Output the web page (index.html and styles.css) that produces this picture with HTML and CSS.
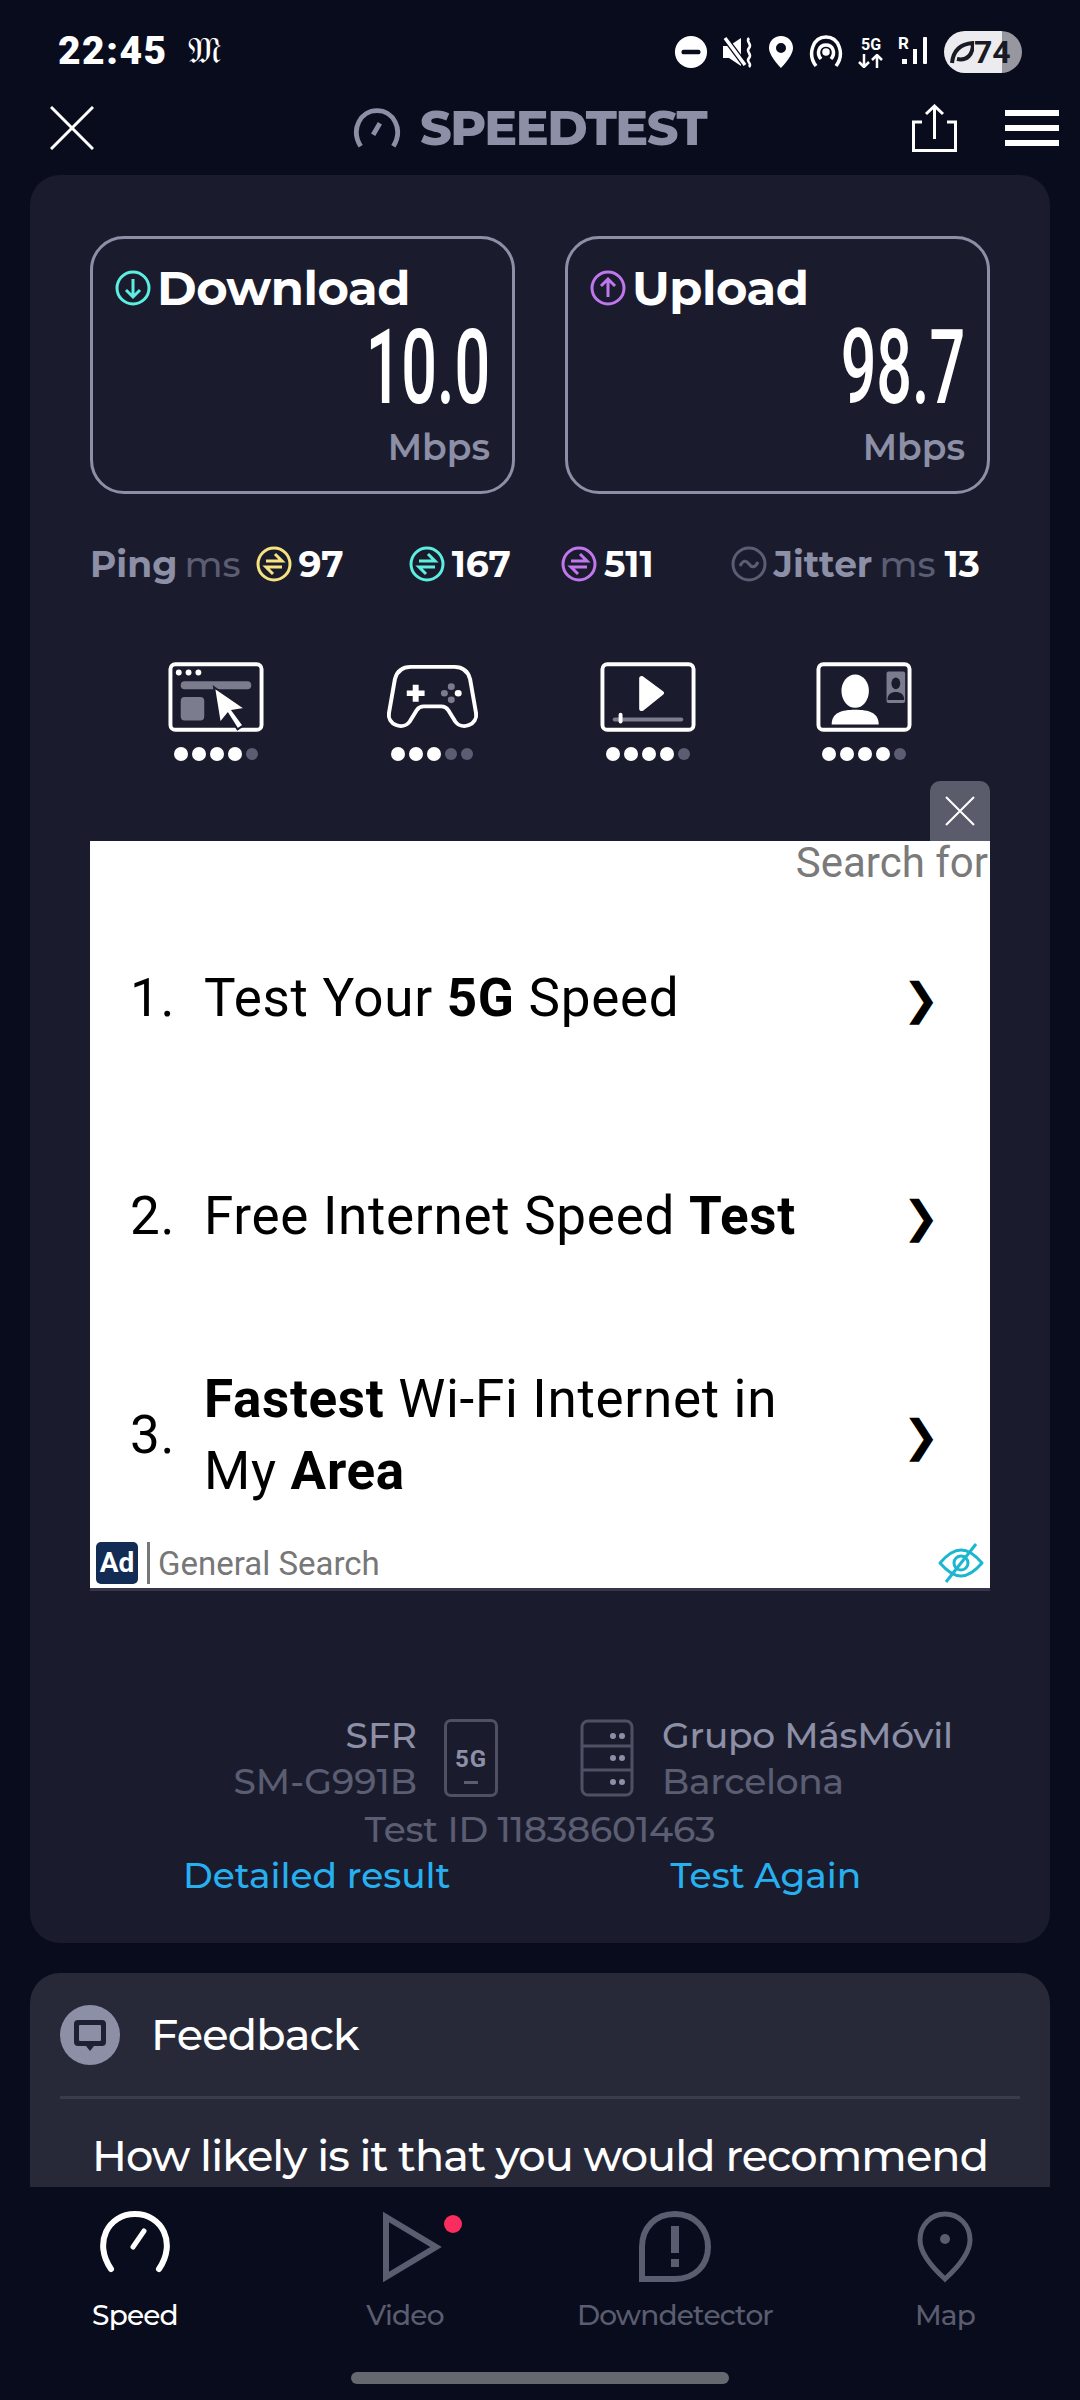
FILE: index.html
```html
<!DOCTYPE html>
<html lang="en">
<head>
<meta charset="utf-8">
<title>Speedtest</title>
<link rel="stylesheet" href="styles.css">
</head>
<body>
<div class="screen">
  <div class="status">
    <div class="status-left"><span class="time">22:45</span><span class="gothic">𝔐</span></div>
    <div class="status-right">
      <svg class="si" width="34" height="36" viewBox="0 0 36 36"><circle cx="18" cy="18" r="17" fill="#fff"/><rect x="8" y="15.500" width="20" height="5" rx="2" fill="#090c1c"/></svg>
      <svg class="si" width="32" height="36" viewBox="0 0 32 36"><path d="M1 12h6l12-8v28l-12-8H1z" fill="#fff"/><path d="M3 4l20 27" stroke="#090c1c" stroke-width="6"/><path d="M3 4l20 27" stroke="#fff" stroke-width="3.500"/><path d="M27 4c-4 4 4 6 0 10s4 6 0 10 4 5 0 9" fill="none" stroke="#fff" stroke-width="2.500"/></svg>
      <svg class="si" width="26" height="36" viewBox="0 0 26 36"><path fill-rule="evenodd" d="M13 2C6 2 1 7 1 14c0 8 12 20 12 20s12-12 12-20C25 7 20 2 13 2zm0 7a5 5 0 1 1 0 10 5 5 0 0 1 0-10z" fill="#fff"/></svg>
      <svg class="si" width="36" height="36" viewBox="0 0 36 36" fill="none" stroke="#fff" stroke-width="3.500"><path d="M8 32C-1 20 5 3 18 3s19 17 10 29"/><path d="M13 25C8 19 11 11 18 11s10 8 5 14"/><circle cx="18" cy="18" r="2" fill="#fff"/></svg>
      <div class="net"><span class="fiveg">5G</span><svg width="26" height="14" viewBox="0 0 26 14" fill="none" stroke="#fff" stroke-width="2.500"><path d="M6 0v12M1 8l5 5 5-5M19 14V2M14 6l5-5 5 5"/></svg></div>
      <div class="sig"><span class="sigr">R</span><svg class="si" width="32" height="36" viewBox="0 0 32 36"><rect x="4" y="25" width="5" height="5" fill="#fff"/><rect x="15" y="15" width="4" height="15" fill="#fff"/><rect x="25" y="3" width="4" height="27" rx="1" fill="#fff"/></svg></div>
      <div class="batt"><svg width="24" height="26" viewBox="0 0 24 26"><path d="M2 24C3 14 8 5 23 4c0 12-6 18-16 16" fill="none" stroke="#1a1a24" stroke-width="4"/></svg><span>74</span></div>
    </div>
  </div>

  <header class="topbar">
    <svg class="x" width="44" height="44" viewBox="0 0 44 44"><path d="M1 1l42 42M43 1L1 43" stroke="#fff" stroke-width="3"/></svg>
    <div class="brand">
      <svg width="48" height="42" viewBox="0 0 50 42" fill="none" stroke="#8d8fa6" stroke-width="5"><path d="M8 40C-3 22 8 3 25 3s28 19 17 37"/><path d="M21 28l7-12" stroke-width="5"/></svg>
      <span>SPEEDTEST</span>
    </div>
    <div class="top-actions">
      <svg width="45" height="48" viewBox="0 0 45 48" fill="none" stroke="#fff" stroke-width="3"><path d="M22.500 2v33M14 10l8.500-8 8.500 8M10 18H1.500v28.500h42V18H35"/></svg>
      <div class="burger"><i></i><i></i><i></i></div>
    </div>
  </header>

  <section class="card result">
    <div class="speeds">
      <div class="speed">
        <div class="speed-head">
          <svg width="36" height="36" viewBox="0 0 36 36" fill="none" stroke="#5ceee0" stroke-width="3"><circle cx="18" cy="18" r="16"/><path d="M18 9v17M11 20l7 7 7-7"/></svg>
          <span>Download</span>
        </div>
        <div class="speed-val"><span>10.0</span></div>
        <div class="speed-unit">Mbps</div>
      </div>
      <div class="speed">
        <div class="speed-head">
          <svg width="36" height="36" viewBox="0 0 36 36" fill="none" stroke="#c077ee" stroke-width="3"><circle cx="18" cy="18" r="16"/><path d="M18 27V10M11 16l7-7 7 7"/></svg>
          <span>Upload</span>
        </div>
        <div class="speed-val"><span>98.7</span></div>
        <div class="speed-unit">Mbps</div>
      </div>
    </div>

    <div class="pings">
      <div class="ping p1"><b class="lbl">Ping</b><span class="ms">ms</span>
        <svg width="36" height="36" viewBox="0 0 36 36" fill="none" stroke="#f6e27f" stroke-width="3"><circle cx="18" cy="18" r="16"/><path d="M10 15h16l-7-7M26 21H10l7 7"/></svg><b class="pv">97</b></div>
      <div class="ping p2">
        <svg width="36" height="36" viewBox="0 0 36 36" fill="none" stroke="#5ceee0" stroke-width="3"><circle cx="18" cy="18" r="16"/><path d="M10 15h16l-7-7M26 21H10l7 7"/></svg><b class="pv">167</b></div>
      <div class="ping p3">
        <svg width="36" height="36" viewBox="0 0 36 36" fill="none" stroke="#c077ee" stroke-width="3"><circle cx="18" cy="18" r="16"/><path d="M10 15h16l-7-7M26 21H10l7 7"/></svg><b class="pv">511</b></div>
      <div class="ping p4">
        <svg width="36" height="36" viewBox="0 0 36 36" fill="none" stroke="#5b5d72" stroke-width="3"><circle cx="18" cy="18" r="16"/><path d="M9 20c3-6 6-6 9-2s6 4 9-2"/></svg><b class="lbl">Jitter</b><span class="ms">ms</span><b class="pv">13</b></div>
    </div>

    <div class="apps">
      <div class="app">
        <svg width="96" height="72" viewBox="0 0 98 72"><rect x="2.500" y="2.500" width="93" height="67" rx="5" fill="none" stroke="#fff" stroke-width="4"/><circle cx="11" cy="11" r="3" fill="#fff"/><circle cx="21" cy="11" r="3" fill="#fff"/><circle cx="31" cy="11" r="3" fill="#fff"/><rect x="13" y="20" width="72" height="8" rx="4" fill="#7b7c8e"/><rect x="13" y="36" width="24" height="24" rx="4" fill="#7b7c8e"/><path d="M47 26l32 22-13 2 11 15-6 4-10-16-8 10z" fill="#fff" stroke="#1a1c2e" stroke-width="2"/></svg>
        <div class="dots"><i></i><i></i><i></i><i></i><i class="off"></i></div>
      </div>
      <div class="app">
        <svg class="pad" width="93" height="66" viewBox="0 0 94 70" preserveAspectRatio="none"><path d="M25 3h44c9 0 14 5 16 13l6 36c2 12-14 19-21 9l-7-12c-2-3-4-4-7-4H38c-3 0-5 1-7 4l-7 12C17 71 1 64 3 52L9 16c2-8 7-13 16-13z" fill="none" stroke="#fff" stroke-width="4"/><path d="M27 22h6v6h6v6h-6v6h-6v-6h-6v-6h6z" fill="#fff"/><circle cx="66" cy="24" r="3.500" fill="#7b7c8e"/><circle cx="66" cy="38" r="3.500" fill="#7b7c8e"/><circle cx="59" cy="31" r="3.500" fill="#7b7c8e"/><circle cx="73" cy="31" r="3.500" fill="#fff"/></svg>
        <div class="dots"><i></i><i></i><i></i><i class="off"></i><i class="off"></i></div>
      </div>
      <div class="app">
        <svg width="96" height="72" viewBox="0 0 98 72"><rect x="2.500" y="2.500" width="93" height="67" rx="5" fill="none" stroke="#fff" stroke-width="4"/><path d="M40 17c0-2 2-3 4-2l20 15c2 1 2 3 0 4L44 50c-2 1-4 0-4-2z" fill="#fff"/><rect x="13" y="58" width="72" height="4" rx="2" fill="#7b7c8e" transform="translate(0 -1)"/><rect x="19" y="52" width="4" height="11" rx="2" fill="#fff"/></svg>
        <div class="dots"><i></i><i></i><i></i><i></i><i class="off"></i></div>
      </div>
      <div class="app">
        <svg width="96" height="72" viewBox="0 0 98 72"><rect x="2.500" y="2.500" width="93" height="67" rx="5" fill="none" stroke="#fff" stroke-width="4"/><ellipse cx="40" cy="30" rx="14" ry="17" fill="#fff"/><path d="M16 64c0-12 10-15 24-15s24 3 24 15z" fill="#fff"/><rect x="72" y="10" width="19" height="32" rx="2" fill="#7b7c8e"/><ellipse cx="81.500" cy="22" rx="4.500" ry="6" fill="#1a1c2e"/><path d="M73 39c0-6 4-8 8.500-8s8.500 2 8.500 8z" fill="#1a1c2e"/></svg>
        <div class="dots"><i></i><i></i><i></i><i></i><i class="off"></i></div>
      </div>
    </div>

    <div class="ad-wrap">
      <div class="ad-close"><svg width="30" height="30" viewBox="0 0 30 30"><path d="M1 1l28 28M29 1L1 29" stroke="#fff" stroke-width="2"/></svg></div>
      <div class="ad">
        <div class="ad-search">Search for</div>
        <div class="ad-row r1"><span class="n">1.</span><span class="t">Test Your <b>5G</b> Speed</span><span class="chev">❯</span></div>
        <div class="ad-row r2"><span class="n">2.</span><span class="t">Free Internet Speed <b>Test</b></span><span class="chev">❯</span></div>
        <div class="ad-row r3"><span class="n">3.</span><span class="t"><b>Fastest</b> Wi-Fi Internet in<br>My <b>Area</b></span><span class="chev">❯</span></div>
        <div class="ad-foot">
          <span class="ad-badge">Ad</span><span class="ad-sep"></span><span class="ad-gen">General Search</span>
          <svg class="ad-eye" width="46" height="40" viewBox="0 0 46 40" fill="none" stroke="#1bb6cf" stroke-width="3" stroke-linejoin="round"><path d="M2 20C8 13 15 7 23 7s15 6 21 13c-6 7-13 13-21 13S8 27 2 20z"/><circle cx="23" cy="20" r="7"/><path d="M38 1L8 39"/></svg>
        </div>
      </div>
    </div>

    <div class="meta">
      <div class="meta-l">
        <div class="m1">SFR</div>
        <div class="m2">SM-G991B</div>
      </div>
      <div class="phone"><span>5G</span><i></i></div>
      <svg class="server" width="54" height="78" viewBox="0 0 54 78" fill="none" stroke="#4e5064" stroke-width="3"><rect x="2" y="2" width="50" height="74" rx="6"/><path d="M2 27h50M2 51h50"/><g fill="#8d8fa6" stroke="none"><circle cx="33" cy="17" r="3"/><circle cx="42" cy="17" r="3"/><circle cx="33" cy="39" r="3"/><circle cx="42" cy="39" r="3"/><circle cx="33" cy="63" r="3"/><circle cx="42" cy="63" r="3"/></g></svg>
      <div class="meta-r">
        <div class="m1">Grupo MásMóvil</div>
        <div class="m2">Barcelona</div>
      </div>
    </div>
    <div class="testid">Test ID 11838601463</div>
    <div class="links"><span>Detailed result</span><span>Test Again</span></div>
  </section>

  <section class="card feedback">
    <div class="fb-head">
      <div class="fb-icon"><svg width="34" height="34" viewBox="0 0 34 34"><path d="M5 2h24a4 4 0 0 1 4 4v18a4 4 0 0 1-4 4h-8l-4 5-4-5H5a4 4 0 0 1-4-4V6a4 4 0 0 1 4-4z" fill="#1e2033"/><rect x="6" y="7" width="22" height="16" rx="1" fill="#8d8fa6"/></svg></div>
      <span>Feedback</span>
    </div>
    <div class="fb-q">How likely is it that you would recommend</div>
  </section>

  <nav class="tabs">
    <div class="tab on">
      <div class="tab-ic">
        <svg width="72" height="62" viewBox="0 0 72 62" fill="none" stroke="#fff" stroke-width="6" stroke-linecap="round"><path d="M12 58C-6 32 9 3 36 3s42 29 24 55"/><path d="M34 36l11-16" stroke-width="5"/></svg>
      </div>
      <span>Speed</span>
    </div>
    <div class="tab">
      <div class="tab-ic vid">
        <svg width="60" height="71" viewBox="0 0 60 71" fill="none" stroke="#5a5c70" stroke-width="6"><path d="M3 6v60l50-30z"/></svg>
        <i class="badge"></i>
      </div>
      <span>Video</span>
    </div>
    <div class="tab">
      <div class="tab-ic">
        <svg width="72" height="71" viewBox="0 0 72 71" fill="none" stroke="#5a5c70" stroke-width="6"><path d="M36 3C16 3 3 17 3 36v32h33c20 0 33-14 33-32S56 3 36 3z"/><path d="M36 15v27" stroke-width="8"/><path d="M36 48v8" stroke-width="8"/></svg>
      </div>
      <span>Downdetector</span>
    </div>
    <div class="tab">
      <div class="tab-ic">
        <svg width="56" height="72" viewBox="0 0 56 72" fill="none" stroke="#5a5c70" stroke-width="5"><path d="M28 3C14 3 3 14 3 29c0 14 14 29 25 39 11-10 25-25 25-39C53 14 42 3 28 3z"/><circle cx="28" cy="28" r="5" fill="#5a5c70" stroke="none"/></svg>
      </div>
      <span>Map</span>
    </div>
  </nav>
  <div class="home"><i></i></div>
</div>
</body>
</html>
```
FILE: styles.css
```css
* { box-sizing: border-box; }
html, body { margin: 0; padding: 0; }
body { background: #090c1c; font-family: "Montserrat", "Inter", "Liberation Sans", sans-serif; }
.screen { width: 1080px; height: 2400px; overflow: hidden; display: flex; flex-direction: column; background: #090c1c; position: relative; }

.status { height: 92px; padding: 30px 58px 0 58px; display: flex; justify-content: space-between; align-items: flex-start; flex: none; }
.status-left { display: flex; align-items: center; gap: 20px; color: #fff; }
.time { font: 900 39px/42px "Roboto", sans-serif; letter-spacing: 1.500px; }
.gothic { font: 400 36px/42px "DejaVu Serif", serif; }
.status-right { display: flex; align-items: center; gap: 14px; height: 44px; }
.si { display: block; }
.sig { position: relative; width: 32px; height: 36px; }
.sigr { position: absolute; left: 0; top: 0; font: 700 17px/18px "Roboto", sans-serif; color: #fff; }
.net { display: flex; flex-direction: column; align-items: center; width: 26px; }
.fiveg { font: 700 16px/18px "Roboto", sans-serif; color: #fff; }
.batt { width: 78px; height: 42px; border-radius: 21px; background: linear-gradient(90deg, #ececf0 0 75%, #97979f 75%); display: flex; align-items: center; padding-left: 6px; }
.batt span { font: 700 32px/42px "Roboto", sans-serif; color: #1a1a24; }

.topbar { height: 84px; flex: none; display: flex; align-items: center; justify-content: space-between; padding: 0 21px 12px 50px; position: relative; }
.x { display: block; }
.brand { position: absolute; left: 353px; top: 6px; display: flex; align-items: center; gap: 19px; }
.brand span { font: 800 49px/60px "Montserrat", "Inter", sans-serif; color: #8d8fa6; letter-spacing: -1.500px; }
.top-actions { display: flex; align-items: center; gap: 48px; }
.burger { display: flex; flex-direction: column; gap: 9px; width: 54px; }
.burger i { display: block; height: 6px; background: #fff; }

.card { margin: 0 30px; background: #1a1c2e; border-radius: 30px; flex: none; }
.result { height: 1768px; padding: 61px 60px 0; margin-top: -1px; }
.speeds { display: flex; gap: 50px; }
.speed { flex: 1; height: 258px; border: 3px solid #8d8fa6; border-radius: 34px; padding: 21px 22px 0 22px; }
.speed-head { display: flex; align-items: center; gap: 6px; color: #fff; font: 700 48px/56px "Montserrat", "Inter", sans-serif; letter-spacing: -0.500px; }
.speed-val { text-align: right; height: 100px; margin-top: 2px; color: #fff; font: 500 103px/100px "Roboto", sans-serif; }
.speed-val span { display: inline-block; transform: scaleX(0.610); transform-origin: right center; }
.speed-unit { text-align: right; font: 600 36px/44px "Montserrat", "Inter", sans-serif; color: #8d8fa6; margin-top: 7px; }

.pings { display: flex; align-items: center; height: 44px; margin-top: 48px; font-size: 36px; font-family: "Montserrat", "Inter", sans-serif; }
.ping { display: flex; align-items: center; gap: 7px; flex: none; }
.lbl { color: #8d8fa6; font-weight: 700; }
.ms { color: #5b5d72; font-weight: 500; margin-left: 0; margin-right: 8px; }
.p4 .ms { margin-right: 2px; }
.pv { color: #fff; font-weight: 700; letter-spacing: 0; }
.ping.p2 { margin-left: 65px; }
.ping.p3 { margin-left: 50px; }
.ping.p4 { margin-left: 77px; }

.apps { display: flex; margin: 75px 0 0 0; padding: 0 0 0 77px; gap: 118px; height: 110px; }
.app { display: flex; flex-direction: column; align-items: center; gap: 14px; width: 98px; }
.app svg { display: block; flex: none; }
.app svg.pad { margin: 3px 0; }
.dots { display: flex; gap: 4px; justify-content: center; align-items: center; }
.dots i { width: 14px; height: 14px; border-radius: 50%; background: #fff; display: block; }
.dots i.off { background: #5b5d72; width: 12px; height: 12px; }

.ad-wrap { margin-top: 70px; position: relative; }
.ad-close { position: absolute; right: 0; top: -60px; width: 60px; height: 60px; background: #5a5c6c; border-radius: 10px 10px 0 0; display: flex; align-items: center; justify-content: center; }
.ad { background: #fff; height: 750px; border-bottom: 3px solid #35364a; display: flex; flex-direction: column; color: #000; font-family: "Roboto", sans-serif; }
.ad-search { text-align: right; font-size: 42px; line-height: 40px; color: #7a7a7a; height: 56px; padding-right: 2px; padding-top: 2px; }
.ad-row { display: flex; align-items: center; padding-left: 40px; font-size: 53px; line-height: 72px; letter-spacing: 0.700px; }
.ad-row.r1 { height: 160px; margin-top: 21px; }
.ad-row.r2 { height: 160px; margin-top: 58px; }
.ad-row.r3 { height: 150px; margin-top: 64px; }
.ad-row b { font-weight: 700; }
.n { width: 74px; flex: none; font-weight: 400; }
.t { flex: 1; }
.chev { font: 400 44px "DejaVu Sans", sans-serif; margin-right: 50px; }
.ad-foot { margin-top: auto; height: 46px; display: flex; align-items: center; padding: 0 6px; margin-bottom: 2px; }
.ad-badge { background: #122c55; color: #fff; font: 700 28px/42px "Roboto", sans-serif; width: 42px; height: 42px; border-radius: 5px; text-align: center; }
.ad-sep { width: 3px; height: 42px; background: #777; margin: 0 8px 0 9px; }
.ad-gen { font-size: 33px; color: #777; flex: 1; }
.ad-eye { flex: none; }

.meta { display: flex; align-items: center; margin-top: 121px; height: 92px; }
.meta .m1 { font: 500 36px/46px "Montserrat", "Inter", sans-serif; color: #8d8fa6; }
.meta .m2 { font: 500 36px/46px "Montserrat", "Inter", sans-serif; color: #5b5d72; }
.meta-l { width: 327px; text-align: right; }
.phone { margin-left: 27px; width: 54px; height: 78px; border: 3px solid #4e5064; border-radius: 7px; display: flex; flex-direction: column; align-items: center; justify-content: flex-end; padding-bottom: 6px; }
.phone span { font: 700 24px/28px "Roboto", sans-serif; color: #8d8fa6; letter-spacing: 1px; }
.phone i { display: block; width: 14px; height: 3px; background: #5b5d72; margin: 8px 0 4px; }
.server { margin-left: 82px; flex: none; }
.meta-r { margin-left: 28px; white-space: nowrap; }
.meta-r .m1, .meta-r .m2 { letter-spacing: -0.300px; }
.testid { text-align: center; font: 500 36px/46px "Montserrat", "Inter", sans-serif; color: #5b5d72; margin-top: 2px; letter-spacing: -0.200px; }
.links { display: flex; color: #27b0f0; font: 500 36px/46px "Montserrat", "Inter", sans-serif; padding-left: 93px; gap: 220px; }

.feedback { margin-top: 30px; height: 300px; background: #272939; padding: 0 30px; border-radius: 30px 30px 0 0; flex: none; }
.fb-head { height: 126px; display: flex; align-items: center; gap: 31px; border-bottom: 3px solid #3a3c4e; color: #fff; font: 500 43px/60px "Montserrat", "Inter", sans-serif; letter-spacing: -0.800px; margin-bottom: 27px; }
.fb-icon { width: 60px; height: 60px; border-radius: 50%; background: #8d8fa6; display: flex; align-items: center; justify-content: center; }
.fb-q { color: #fff; font: 500 43px/60px "Montserrat", "Inter", sans-serif; letter-spacing: -0.900px; text-align: center; white-space: nowrap; }

.tabs { position: absolute; left: 0; right: 0; top: 2187px; height: 213px; background: #090c1c; display: flex; padding-top: 24px; }
.tab { width: 270px; display: flex; flex-direction: column; align-items: center; gap: 14px; color: #5a5c70; font: 500 28px/36px "Montserrat", "Inter", sans-serif; letter-spacing: -0.800px; }
.tab.on { color: #fff; }
.tab-ic { position: relative; height: 72px; display: flex; justify-content: center; }
.tab-ic.vid { margin-left: 16px; }
.tab svg { flex: none; display: block; }
.badge { position: absolute; right: -19px; top: 4px; width: 18px; height: 18px; border-radius: 50%; background: #fb2d5e; display: block; }
.home { position: absolute; left: 0; right: 0; top: 2372px; display: flex; justify-content: center; }
.home i { display: block; width: 378px; height: 12px; background: #66686f; border-radius: 6px; }
```
